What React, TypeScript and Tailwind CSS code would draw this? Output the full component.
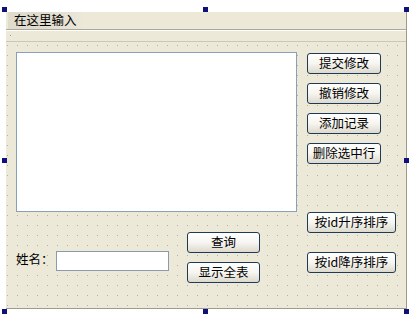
const font = { fontFamily: '"Noto Sans CJK SC", "Liberation Sans", sans-serif' };

function XpButton({ label, className }: { label: string; className: string }) {
  return (
    <div
      className={`flex items-center justify-center rounded-[3px] border border-[#1f3a56] bg-gradient-to-b from-white via-[#f6f5f0] to-[#dcd9cd] text-[12.5px] leading-none text-black ${className}`}
    >
      {label}
    </div>
  );
}

function Handle({ className }: { className: string }) {
  return <div className={`absolute h-[5px] w-[5px] bg-[#10107a] ${className}`} />;
}

export default function App() {
  return (
    <div className="relative h-[322px] w-[415px] overflow-hidden bg-white" style={font}>
      <div className="pl-[6px] pt-[12px]">
        <div className="flex h-[297px] w-[401px] flex-col border-b border-r border-[#9d9a8c] bg-[#ece9d8]">
          {/* menu bar */}
          <div className="flex h-[17px] items-stretch">
            <div className="ml-[2px] flex w-[74px] items-center bg-gradient-to-r from-[#e0dccd] via-[#e0dccd] to-[#ebe8da] pl-[6px] text-[12.5px] leading-none text-black">
              在这里输入
            </div>
          </div>
          <div className="h-[1px] bg-[#aca899]" />
          <div className="h-[1px] bg-white" />
          <div className="relative h-[10px]">
            <div className="absolute left-[4px] top-[4px] h-[1px] w-[1px] bg-[#9a9a9a]" />
          </div>
          <div className="h-[1px] bg-[#cbc7b8]" />

          {/* central widget */}
          <div className="flex flex-1 bg-[radial-gradient(circle_at_0.5px_0.5px,#b3b0a3_0.6px,transparent_0.9px)] bg-[size:10px_10px] bg-[position:1px_3px] pl-[10px] pt-[10px]">
            <div className="flex w-[291px] flex-col">
              <div className="h-[160px] w-[281px] border border-[#8aa0b6] bg-white" />
              <div className="mt-[20px] flex">
                <div className="mt-[19px] flex h-[20px] items-start">
                  <div className="w-[40px] pt-[2px] text-[12.5px] leading-none text-black">姓名：</div>
                  <div className="h-[20px] w-[113px] border border-[#8a9bb0] bg-white" />
                </div>
                <div className="ml-[18px] flex flex-col gap-[9px]">
                  <XpButton label="查询" className="h-[21px] w-[73px]" />
                  <XpButton label="显示全表" className="h-[21px] w-[73px]" />
                </div>
              </div>
            </div>
            <div className="mt-[1px] flex flex-col">
              <XpButton label="提交修改" className="h-[21px] w-[74px]" />
              <XpButton label="撤销修改" className="mt-[9px] h-[21px] w-[74px]" />
              <XpButton label="添加记录" className="mt-[9px] h-[21px] w-[74px]" />
              <XpButton label="删除选中行" className="mt-[9px] h-[21px] w-[74px]" />
              <XpButton label="按id升序排序" className="mt-[48px] h-[21px] w-[89px]" />
              <XpButton label="按id降序排序" className="mt-[19px] h-[21px] w-[89px]" />
            </div>
          </div>
        </div>
      </div>

      {/* selection handles */}
      <Handle className="left-[2px] top-[7px]" />
      <Handle className="left-[203px] top-[7px]" />
      <Handle className="left-[404px] top-[7px]" />
      <Handle className="left-[2px] top-[158px]" />
      <Handle className="left-[404px] top-[158px]" />
      <Handle className="left-[2px] top-[309px]" />
      <Handle className="left-[203px] top-[309px]" />
      <Handle className="left-[404px] top-[309px]" />
    </div>
  );
}
